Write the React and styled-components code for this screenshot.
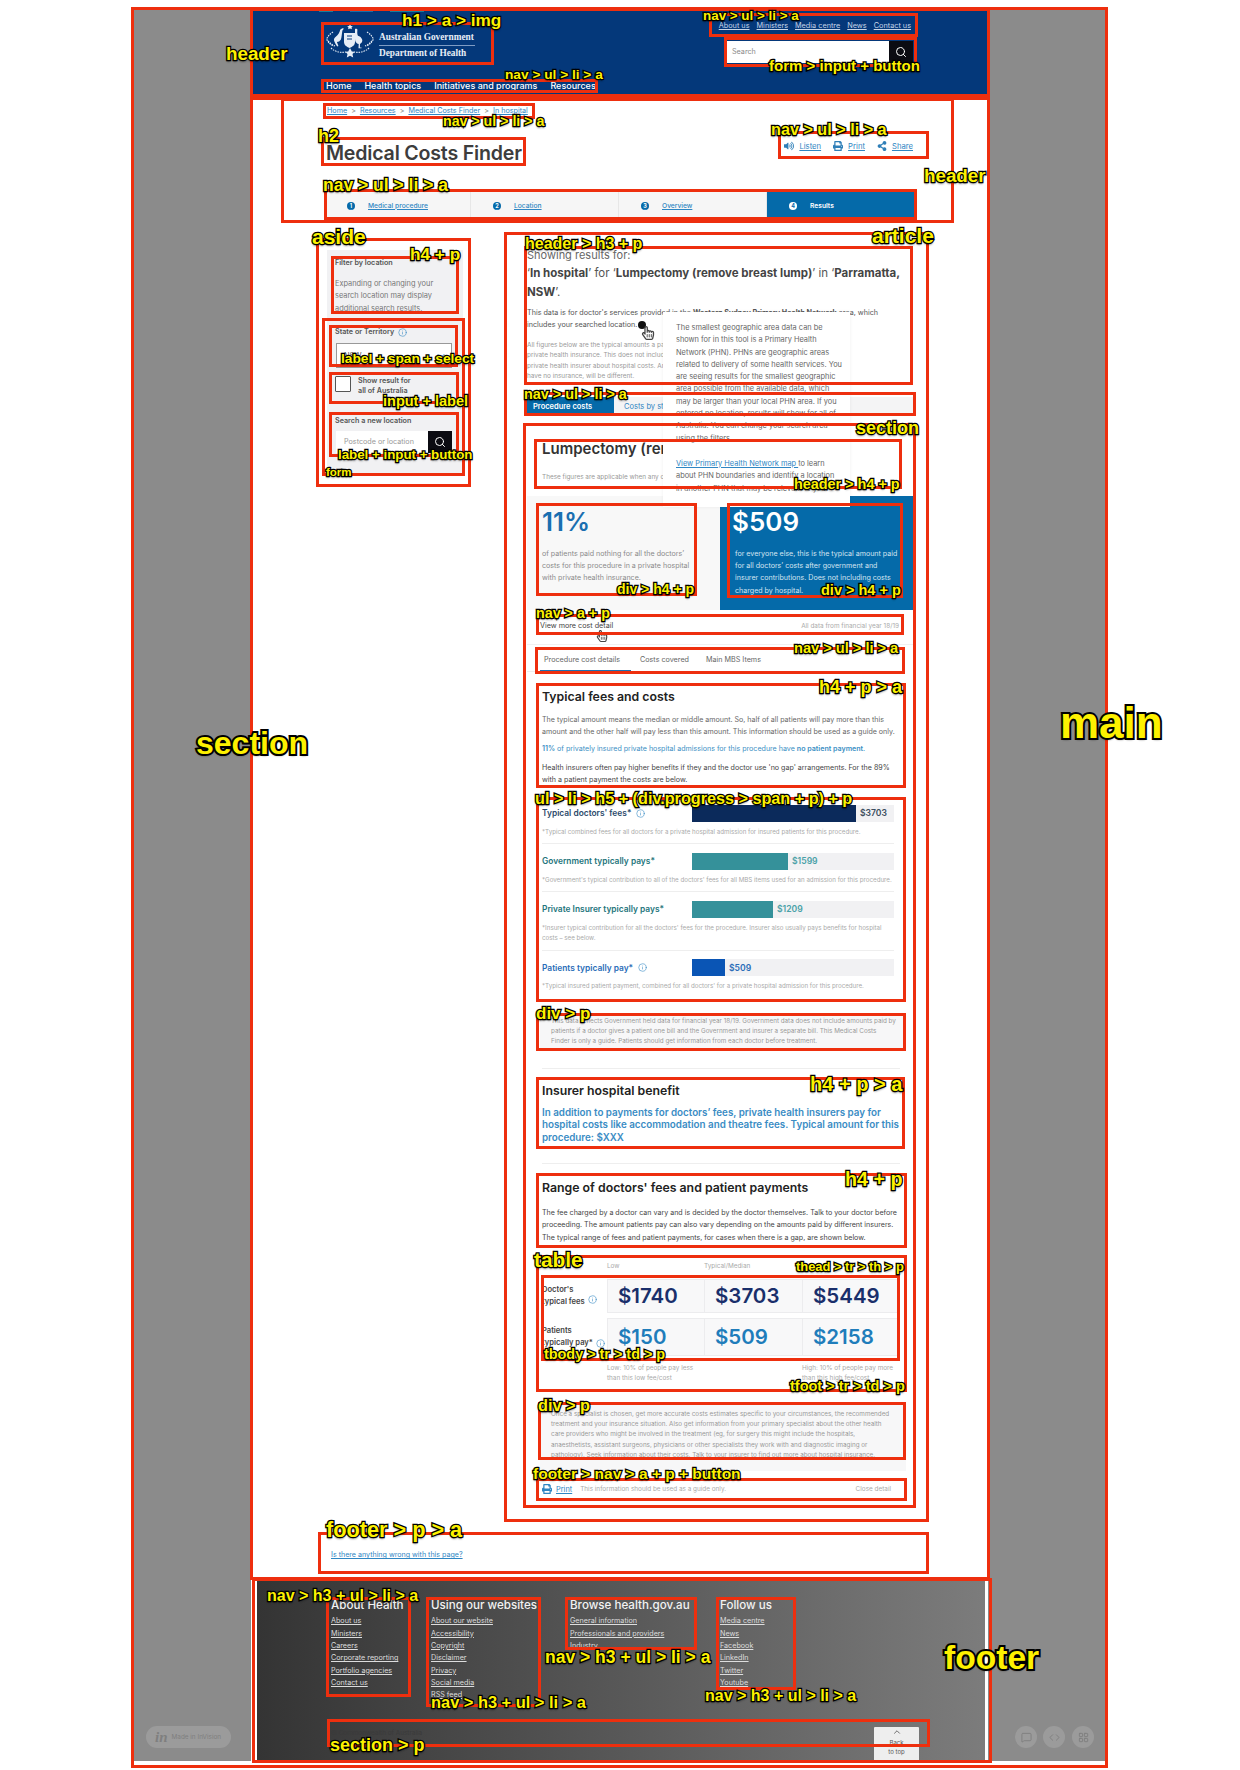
import React from 'react';
import styled, { createGlobalStyle } from 'styled-components';
import { FaVolumeUp, FaPrint, FaRegHandPointer, FaShareAlt } from 'react-icons/fa';
import { Search, ChevronDown, ChevronUp, Info, MessageSquare, Code, LayoutGrid } from 'lucide-react';

const GlobalStyle = createGlobalStyle`
  html, body { margin: 0; padding: 0; background: #fff; }
  body { font-family: Inter, "Noto Sans", sans-serif; color: #444; -webkit-font-smoothing: antialiased; }
  p, h1, h2, h3, h4, h5, ul { margin: 0; padding: 0; }
  ul { list-style: none; }
`;

const Page = styled.div`
  position: relative;
  width: 1240px;
  height: 1770px;
  overflow: hidden;
  background: #fff;
`;

const Backdrop = styled.div`
  margin: 8px 0 0 133px;
  width: 974px;
  height: 1753px;
  padding-left: 118px;
  box-sizing: border-box;
  background: #8b8b8b;
`;

const Column = styled.div`
  width: 737px;
  height: 100%;
  background: #fff;
  display: flex;
  flex-direction: column;
`;

/* masthead */
const Masthead = styled.header`
  background: #04387a;
  height: 86px;
  flex: none;
  box-sizing: border-box;
  padding-top: 1px;
`;
const Strip = styled.div`
  display: flex;
  height: 3px;
  padding-left: 68px;
  gap: 17px;
`;
const StripBit = styled.span`
  width: ${p => p.$w}px;
  background: ${p => p.$c};
`;
const MastRow = styled.div`
  display: flex;
  justify-content: space-between;
  padding: 9px 75px 0 74px;
`;
const Brand = styled.a`
  display: flex;
  align-items: center;
  gap: 4px;
  margin-top: 4px;
  height: 34px;
  color: #fff;
`;
const BrandText = styled.div`
  font-family: "Liberation Serif", serif;
  font-weight: 700;
  font-size: 9.3px;
  line-height: 12px;
  color: #e8eef6;
  padding-top: 5px;
`;
const BrandLine = styled.div`
  border-top: 1px solid #7f9cc4;
  margin: 2px 0 1px;
  width: 96px;
`;
const MastRight = styled.div`
  display: flex;
  flex-direction: column;
  align-items: flex-end;
`;
const TopLinks = styled.ul`
  display: flex;
  gap: 7px;
  height: 10px;
  padding-right: 2px;
`;
const TopLink = styled.a`
  display: block;
  font-size: 7.3px;
  line-height: 10px;
  color: #c5d4e8;
  text-decoration: underline;
`;
const SearchForm = styled.form`
  display: flex;
  margin-top: 10px;
  width: 187px;
  height: 22px;
`;
const SearchInput = styled.div`
  flex: 1;
  background: #fff;
  font-size: 7.2px;
  line-height: 22px;
  color: #888;
  padding-left: 6px;
`;
const SearchBtn = styled.button`
  width: 24px;
  border: 0;
  padding: 0;
  background: #0b0b12;
  color: #fff;
  display: flex;
  align-items: center;
  justify-content: center;
`;
const MainNav = styled.ul`
  display: flex;
  gap: 13px;
  margin: 17px 0 0 75px;
`;
const MainLink = styled.a`
  display: block;
  font-size: 9px;
  line-height: 12px;
  font-weight: 500;
  color: #fff;
`;

/* page header */
const PageHead = styled.div`
  padding: 11px 0 0 76px;
  flex: none;
`;
const Crumbs = styled.ul`
  display: flex;
  gap: 4px;
  font-size: 7.2px;
  line-height: 12px;
  color: #888;
`;
const Link = styled.a`
  color: #2f86c3;
  text-decoration: underline;
`;
const TitleRow = styled.div`
  display: flex;
  justify-content: space-between;
  padding: 24px 75px 0 0;
  height: 51px;
  box-sizing: border-box;
`;
const Title = styled.h2`
  font-size: 19.6px;
  line-height: 24px;
  font-weight: 600;
  color: #3d3d3d;
  letter-spacing: -0.2px;
  margin-left: -1px;
`;
const Tools = styled.ul`
  display: flex;
  align-items: center;
  gap: 12px;
  height: 12px;
  margin-top: -1px;
  font-size: 7.7px;
  color: #2f7fb8;
`;
const Tool = styled.li`
  display: flex;
  align-items: center;
  gap: 5px;
`;
const Steps = styled.ul`
  display: grid;
  grid-template-columns: 146px 148px 148px 148px;
  width: 590px;
  height: 27px;
  margin: 24px 0 0 -2px;
`;
const Step = styled.li`
  display: flex;
  align-items: center;
  gap: 13px;
  padding-left: 22px;
  font-size: 6.7px;
  background: ${p => (p.$on ? '#056aa9' : '#f6f6f6')};
  color: ${p => (p.$on ? '#fff' : '#2f86c3')};
  border-right: ${p => (p.$on ? '0' : '1px solid #e7e7e7')};
  text-decoration: ${p => (p.$on ? 'none' : 'underline')};
  font-weight: ${p => (p.$on ? 600 : 500)};
`;
const StepNum = styled.span`
  width: 8px;
  height: 8px;
  border-radius: 50%;
  flex: none;
  font-size: 5.5px;
  line-height: 8px;
  text-align: center;
  font-weight: 700;
  display: block;
  background: ${p => (p.$on ? '#fff' : '#056aa9')};
  color: ${p => (p.$on ? '#056aa9' : '#fff')};
`;

/* body */
const Body = styled.div`
  display: grid;
  grid-template-columns: 136px 388px;
  column-gap: 64px;
  margin-top: 29px;
  padding-left: 76px;
  flex: none;
`;

/* aside */
const Aside = styled.aside`
  margin-top: 2px;
  height: 223px;
  box-sizing: border-box;
  padding: 8px 11px 0 8px;
  background: #f1f1f3;
  align-self: start;
`;
const AsideHead = styled.h4`
  font-size: 7.2px;
  line-height: 10px;
  font-weight: 600;
  color: #555;
`;
const AsideText = styled.p`
  font-size: 7.4px;
  line-height: 12.4px;
  color: #777;
  margin-top: 10px;
`;
const AsideLabel = styled.div`
  display: flex;
  align-items: center;
  gap: 4px;
  font-size: 7.2px;
  line-height: 10px;
  font-weight: 600;
  color: #555;
  margin-top: ${p => p.$mt}px;
`;
const SelectBox = styled.div`
  box-sizing: border-box;
  display: flex;
  justify-content: space-between;
  align-items: center;
  width: 116px;
  height: 25px;
  margin: 6px 0 0 1px;
  padding: 0 4px 0 7px;
  background: #fff;
  border: 1px solid #999;
  font-size: 7.4px;
  color: #555;
`;
const CheckRow = styled.div`
  display: flex;
  gap: 7px;
  margin-top: 8px;
  font-size: 7.2px;
  line-height: 10px;
  font-weight: 600;
  color: #555;
`;
const CheckMark = styled.span`
  display: block;
  width: 16px;
  height: 16px;
  flex: none;
  box-sizing: border-box;
  background: #fff;
  border: 1px solid #555;
  border-radius: 1px;
`;
const LocationRow = styled.div`
  display: flex;
  width: 116px;
  height: 22px;
  margin: 5px 0 0 1px;
`;
const LocationInput = styled.div`
  flex: 1;
  background: #fff;
  font-size: 7.2px;
  line-height: 22px;
  padding-left: 8px;
  color: #999;
`;

/* article */
const Article = styled.article`
  position: relative;
`;
const Showing = styled.h3`
  font-size: 11px;
  line-height: 14px;
  font-weight: 400;
  color: #666;
`;
const Sentence = styled.p`
  font-size: 11.5px;
  line-height: 19px;
  font-weight: 400;
  color: #555;
  margin-top: 2px;
  max-width: 384px;
  b { font-weight: 700; color: #444; }
`;
const Intro = styled.p`
  font-size: 7.2px;
  line-height: 12px;
  color: #555;
  margin-top: 5px;
  max-width: 358px;
`;
const Fine = styled.p`
  font-size: 6.4px;
  line-height: 10.4px;
  color: #9a9a9a;
  margin-top: 9px;
  white-space: nowrap;
`;
const Tabs = styled.ul`
  display: flex;
  margin-top: 15px;
  height: 19px;
  background: #f4f4f5;
  font-size: 7.5px;
  line-height: 19px;
`;
const Tab = styled.li`
  width: ${p => p.$w}px;
  box-sizing: border-box;
  padding-left: ${p => p.$on ? 6 : 10}px;
  background: ${p => (p.$on ? '#056aa9' : 'transparent')};
  color: ${p => (p.$on ? '#fff' : '#2f86c3')};
  font-weight: ${p => (p.$on ? 600 : 400)};
`;
const Dot = styled.span`
  position: absolute;
  left: 111px;
  top: 73px;
  width: 8px;
  height: 8px;
  border-radius: 50%;
  background: #111;
`;
const Hand = styled.span`
  position: absolute;
  left: ${p => p.$x}px;
  top: ${p => p.$y}px;
  color: #444;
  display: flex;
  z-index: 3;
`;
const Popover = styled.div`
  position: absolute;
  left: 136px;
  top: 64px;
  width: 187px;
  height: 195px;
  box-sizing: border-box;
  padding: 10px 8px 0 13px;
  overflow: hidden;
  background: #fff;
  box-shadow: 0 0 4px rgba(0, 0, 0, 0.06);
  z-index: 2;
  font-size: 7.4px;
  line-height: 12.3px;
  color: #666;
`;
const Gap = styled.div`
  height: ${p => p.$h}px;
`;
const Lump = styled.h4`
  font-size: 15px;
  line-height: 20px;
  font-weight: 600;
  color: #333;
  margin: 23px 0 0 15px;
  white-space: nowrap;
`;
const LumpNote = styled.p`
  font-size: 6.4px;
  line-height: 10px;
  color: #999;
  margin: 13px 0 0 15px;
`;
const Cards = styled.div`
  display: grid;
  grid-template-columns: 193px 195px;
  margin-top: 14px;
  height: 114px;
`;
const Card = styled.div`
  background: ${p => (p.$blue ? '#056aa9' : '#f8f8f8')};
  padding: 11px 0 0 ${p => (p.$blue ? 12 : 15)}px;
`;
const Big = styled.div`
  font-size: 26px;
  line-height: 30px;
  font-weight: 600;
  color: ${p => (p.$blue ? '#fff' : '#1a6fb0')};
`;
const CardText = styled.p`
  font-size: 7.1px;
  line-height: 12.4px;
  margin: 11px 0 0 ${p => (p.$blue ? 3 : 0)}px;
  max-width: ${p => (p.$blue ? 166 : 150)}px;
  color: ${p => (p.$blue ? '#d5e5f1' : '#8a8a8a')};
`;
const CostNav = styled.div`
  display: flex;
  justify-content: space-between;
  align-items: baseline;
  padding: 11px 16px 13px 13px;
  border-bottom: 1px solid #f1f1f1;
`;
const CostLink = styled.a`
  font-size: 7.2px;
  line-height: 10px;
  color: #444;
`;
const CostDate = styled.span`
  font-size: 6.4px;
  line-height: 10px;
  color: #aaa;
`;
const DetailTabs = styled.ul`
  display: flex;
  padding-left: 13px;
  margin-right: 10px;
  border-bottom: 1px solid #eee;
`;
const DetailTab = styled.li`
  box-sizing: border-box;
  width: ${p => p.$w}px;
  padding: 10px 0 5px 4px;
  font-size: 7.2px;
  line-height: 10px;
  color: #666;
  border-bottom: 2px solid ${p => (p.$on ? '#1f6fb0' : 'transparent')};
  margin-bottom: -1px;
  margin-right: ${p => p.$mr ?? 0}px;
`;
const Detail = styled.div`
  padding: 17px 15px 0 15px;
`;
const Head = styled.h4`
  font-size: 12.3px;
  line-height: 16px;
  font-weight: 600;
  color: #222;
`;
const Para = styled.p`
  font-size: 7.1px;
  line-height: 12.3px;
  color: ${p => p.$c || '#666'};
  margin-top: ${p => p.$mt}px;
  b { font-weight: 600; }
`;
const BarList = styled.ul`
  margin-top: 10px;
`;
const BarRow = styled.li`
  padding: 8.5px 0 6px;
  border-bottom: ${p => (p.$last ? '0' : '1px solid #eee')};
  margin-right: 6px;
`;
const BarHead = styled.div`
  display: grid;
  grid-template-columns: 150px 202px;
  align-items: center;
`;
const BarTitle = styled.h5`
  display: flex;
  align-items: center;
  gap: 5px;
  font-size: 8.4px;
  line-height: 12px;
  font-weight: 600;
  color: ${p => p.$c};
`;
const Track = styled.div`
  display: flex;
  align-items: center;
  height: 17px;
  background: #f1f1f3;
`;
const Fill = styled.span`
  height: 100%;
  flex: none;
  background: ${p => p.$c};
`;
const Amount = styled.span`
  margin-left: 4px;
  font-size: 8.6px;
  font-weight: 600;
  color: ${p => p.$c};
`;
const BarNote = styled.p`
  font-size: 6.2px;
  line-height: 10.5px;
  color: #aaa;
  margin-top: 5px;
`;
const NoteBox = styled.div`
  background: #f7f7f8;
  margin: ${p => p.$mt}px -6px 0 -2px;
  padding: ${p => p.$pt}px 10px ${p => p.$pb}px 11px;
  font-size: 6.3px;
  line-height: 10.3px;
  color: #999;
`;
const Rule = styled.hr`
  border: 0;
  border-top: 1px solid #eee;
  margin: ${p => p.$mt}px 0 ${p => p.$mb}px;
`;
const Benefit = styled.p`
  font-size: 9.8px;
  line-height: 12.5px;
  font-weight: 600;
  color: #3a8cc4;
  margin-top: 8px;
`;
const FeeTable = styled.div`
  display: grid;
  grid-template-columns: 65px 97px 98px 97px;
  margin-top: 17px;
  font-size: 6.4px;
  line-height: 10px;
  color: #aaa;
`;
const ThCell = styled.div`
  padding-bottom: 8px;
`;
const RowLabel = styled.div`
  display: flex;
  align-items: center;
  gap: 3px;
  font-size: 7.6px;
  line-height: 12.3px;
  font-weight: 600;
  color: #444;
  margin-bottom: 5px;
  svg { align-self: flex-end; margin-bottom: ${p => (p.$second ? 8 : 9)}px; }
`;
const Fee = styled.div`
  box-sizing: border-box;
  height: ${p => p.$h}px;
  margin-bottom: 5px;
  padding-left: 10px;
  background: #f8f8f9;
  border: 1px solid #ececee;
  border-right-width: ${p => (p.$end ? 1 : 0)}px;
  font-size: 20.5px;
  line-height: ${p => p.$h - 2}px;
  font-weight: 600;
  color: ${p => p.$c};
`;
const TableFoot = styled.div`
  padding-top: 2px;
  white-space: nowrap;
`;
const DetailFoot = styled.div`
  display: flex;
  align-items: center;
  margin: 13px 9px 0 0;
  height: 10px;
  font-size: 6.4px;
  color: #aaa;
`;
const PrintLink = styled(Link)`
  font-size: 7.4px;
  margin: 0 8px 0 4px;
`;
const CloseBtn = styled.span`
  margin-left: auto;
`;

/* report link */
const Report = styled.p`
  margin: 56px 0 0 80px;
  font-size: 7.1px;
  line-height: 10px;
  flex: none;
`;

/* footer */
const Footer = styled.footer`
  margin: 20px 3px 0 6px;
  flex: 1;
  background: linear-gradient(90deg, #343434 0%, #7c7c7c 100%);
  display: flex;
  flex-direction: column;
  padding: 18px 66px 0 74px;
`;
const FootCols = styled.div`
  display: grid;
  grid-template-columns: 100px 139px 150px auto;
`;
const FootHead = styled.h3`
  font-size: 11.6px;
  line-height: 14px;
  font-weight: 500;
  color: #f2f2f2;
  white-space: nowrap;
`;
const FootList = styled.ul`
  margin-top: 3px;
`;
const FootLink = styled.a`
  display: block;
  font-size: 7.2px;
  line-height: 12.3px;
  color: #ddd;
  text-decoration: underline;
`;
const FootBase = styled.div`
  display: flex;
  justify-content: space-between;
  align-items: flex-start;
  margin-top: auto;
`;
const Copyright = styled.p`
  font-size: 6.4px;
  line-height: 10px;
  color: #3a3a3a;
  padding-top: 1px;
`;
const BackTop = styled.div`
  width: 45px;
  height: 34px;
  background: #eee;
  border-radius: 1px 1px 0 0;
  text-align: center;
  font-size: 6px;
  line-height: 8.4px;
  color: #555;
`;

/* invision chrome */
const Pill = styled.div`
  position: absolute;
  left: 146px;
  top: 1726px;
  width: 85px;
  height: 22px;
  border-radius: 11px;
  background: #9b9b9b;
  color: #7f7f7f;
  display: flex;
  align-items: center;
  gap: 4px;
  padding-left: 9px;
  box-sizing: border-box;
  font-size: 6.4px;
`;
const PillIn = styled.span`
  font-family: "Liberation Serif", serif;
  font-style: italic;
  font-size: 15px;
  font-weight: 700;
`;
const Round = styled.div`
  position: absolute;
  left: ${p => p.$x}px;
  top: 1726px;
  width: 22px;
  height: 22px;
  border-radius: 50%;
  background: #9b9b9b;
  color: #7f7f7f;
  display: flex;
  align-items: center;
  justify-content: center;
`;

/* annotation layer */
const Mark = styled.div`
  position: absolute;
  left: ${p => p.$x}px;
  top: ${p => p.$y}px;
  width: ${p => p.$w}px;
  height: ${p => p.$h}px;
  box-sizing: border-box;
  border: 3px solid #ee2f0e;
  z-index: 5;
  pointer-events: none;
`;
const Tag = styled.span`
  position: absolute;
  left: ${p => p.$x}px;
  top: ${p => p.$y}px;
  transform: translateY(-50%);
  font-family: "Liberation Sans", Arial, sans-serif;
  font-weight: 700;
  font-size: ${p => p.$s}px;
  line-height: 1;
  white-space: nowrap;
  color: #fdf100;
  -webkit-text-stroke: ${p => (p.$s > 25 ? 4 : 2.5)}px #000;
  paint-order: stroke fill;
  text-shadow: 0 2px 2px rgba(0, 0, 0, 0.45);
  z-index: 6;
`;

const boxes = [
  [131, 7, 1108, 1768], [250, 8, 990, 97], [250, 97, 990, 1580], [252, 1578, 992, 1763],
  [321, 22, 494, 65], [709, 13, 918, 37], [724, 37, 917, 67], [321, 79, 598, 93],
  [281, 98, 954, 223], [323, 103, 535, 119], [321, 137, 526, 166], [778, 131, 929, 159],
  [324, 189, 917, 220], [316, 238, 471, 487], [331, 256, 459, 314], [322, 318, 465, 476],
  [329, 325, 458, 367], [329, 372, 459, 404], [329, 412, 459, 457], [504, 232, 929, 1522],
  [524, 246, 913, 385], [524, 392, 916, 416], [523, 423, 916, 1508], [534, 439, 902, 489],
  [536, 503, 697, 596], [727, 503, 903, 598], [536, 614, 904, 635], [535, 647, 905, 674],
  [536, 683, 906, 788], [536, 797, 906, 1002], [536, 1013, 906, 1051], [536, 1077, 905, 1149],
  [536, 1173, 907, 1248], [536, 1255, 907, 1392], [541, 1275, 900, 1361], [538, 1402, 906, 1460],
  [536, 1478, 907, 1501], [318, 1532, 929, 1574], [326, 1597, 411, 1697], [426, 1597, 541, 1707],
  [565, 1597, 697, 1650], [716, 1597, 796, 1690], [327, 1719, 930, 1747],
];

const NAV = 'nav > ul > li > a';
const FOOTNAV = 'nav > h3 + ul > li > a';
const tags = [
  ['h1 > a > img', 402, 21, 17.2], ['header', 226, 54, 18.8], [NAV, 703, 16, 13.4],
  ['form > input + button', 769, 65, 15], [NAV, 505, 75, 13.7], [NAV, 443, 121, 14.2],
  ['h2', 318, 136, 18], [NAV, 771, 129, 16.2], ['header', 924, 176, 18.8], [NAV, 323, 186, 17.5],
  ['aside', 312, 236, 21], ['h4 + p', 410, 255, 17.2], ['header > h3 + p', 525, 244, 16],
  ['article', 872, 235, 21], ['label + span + select', 341, 359, 13.7], ['input + label', 383, 401, 14.5],
  ['label + input + button', 338, 455, 13.3], ['form', 326, 473, 11.5], [NAV, 524, 394, 14.4],
  ['section', 856, 428, 18], ['header > h4 + p', 794, 484, 14.4], ['div > h4 + p', 617, 589, 14],
  ['div > h4 + p', 821, 590, 14.5], ['nav > a + p', 536, 613, 14.3], [NAV, 794, 648, 14.6],
  ['h4 + p > a', 819, 687, 18], ['ul > li > h5 + (div.progress > span + p) + p', 535, 798, 16.2],
  ['div > p', 536, 1013, 17], ['h4 + p > a', 810, 1084, 20], ['h4 + p', 845, 1180, 19.7],
  ['table', 534, 1260, 20.8], ['thead > tr > th > p', 796, 1267, 12.9], ['tbody > tr > td > p', 544, 1354, 14.4],
  ['tfoot > tr > td > p', 790, 1386, 14.5], ['div > p', 538, 1405, 16.3], ['footer > nav > a + p + button', 533, 1474, 15.5],
  ['footer > p > a', 326, 1530, 21.7], ['main', 1060, 723, 44], ['section', 196, 743, 32], ['footer', 944, 1658, 33.6],
  [FOOTNAV, 267, 1596, 16], [FOOTNAV, 545, 1658, 17.5], [FOOTNAV, 431, 1702, 16.4], [FOOTNAV, 705, 1696, 16],
  ['section > p', 330, 1745, 18],
];

const topLinks = ['About us', 'Ministers', 'Media centre', 'News', 'Contact us'];
const mainLinks = ['Home', 'Health topics', 'Initiatives and programs', 'Resources'];
const steps = ['Medical procedure', 'Location', 'Overview', 'Results'];
const bars = [
  { title: "Typical doctors' fees*", info: true, c: '#2c4a6b', fill: '#0b2a5b', w: 164, amount: '$3703', ac: '#3c4e60',
    note: '*Typical combined fees for all doctors for a private hospital admission for insured patients for this procedure.' },
  { title: 'Government typically pays*', c: '#24757c', fill: '#35919a', w: 96, amount: '$1599', ac: '#4aa1a8',
    note: "*Government's typical contribution to all of the doctors' fees for all MBS items used for an admission for this procedure." },
  { title: 'Private Insurer typically pays*', c: '#24757c', fill: '#35919a', w: 81, amount: '$1209', ac: '#4aa1a8',
    note: "*Insurer typical contribution for all the doctors' fees for the procedure. Insurer also usually pays benefits for hospital costs – see below." },
  { title: 'Patients typically pay*', info: true, c: '#2a6db8', fill: '#0a55b5', w: 33, amount: '$509', ac: '#2a6db8',
    note: "*Typical insured patient payment, combined for all doctors' for a private hospital admission for this procedure." },
];
const footerCols = [
  ['About Health', ['About us', 'Ministers', 'Careers', 'Corporate reporting', 'Portfolio agencies', 'Contact us']],
  ['Using our websites', ['About our website', 'Accessibility', 'Copyright', 'Disclaimer', 'Privacy', 'Social media', 'RSS feed']],
  ['Browse health.gov.au', ['General information', 'Professionals and providers', 'Industry']],
  ['Follow us', ['Media centre', 'News', 'Facebook', 'LinkedIn', 'Twitter', 'Youtube']],
];

function CoatOfArms() {
  return (
    <svg width="50" height="36" viewBox="0 0 50 36" fill="#e6edf6">
      <path d="M25 0.5l1 1.6 1.8.2-1.3 1.2.4 1.8-1.9-.9-1.9.9.4-1.8-1.3-1.2 1.8-.2z" />
      <path d="M18 4c-1 .6-2 .8-2.800 1.800-.6 3-2 5-5 7.500-1.500 1.300-1.500 3-.6 4.700.4.9 1.600 3.500 2.800 4.500l1-.5-1.500-4c1.500 0 3-.8 4-2.500.8-2 .9-6 1.500-9 .4-.6 1-1.200 1.300-1.800z" />
      <path d="M30 5c.7-.6 2.200-.5 2.400.5-.1 2.500-.4 4.500.5 6.200 1.600.2 4 2 4.400 4.300.2 2-1 3.300-2.300 4l-.1 3.500h1.600v.8h-3l.2-4.300c-1.500-.2-3-1.500-3.500-3.300-.3-2-.2-5-.2-8.700z" />
      <path d="M19 9h11v9c0 3-2.500 4.800-5.500 6C21.500 22.800 19 21 19 18z" />
      <path d="M25 24l1.800 3.500 3 .3-2.300 2.200.7 3.400-3.200-1.700-3.200 1.700.7-3.400-2.300-2.200 3-.3z" />
      <g fill="none" stroke="#e6edf6" strokeWidth="1.100" strokeDasharray="1.500 1">
        <path d="M8 8c-3 2-5 4-6.500 7 2 4 4 6 7.500 7" />
        <path d="M42 8c3 2 5 4 6.500 7-2 4-4 6-7.500 7" />
        <path d="M6 24c4 4 10 5 15 4" />
        <path d="M44 24c-4 4-10 5-15 4" />
        <path d="M3 17c2 2 4 4 7 5" />
        <path d="M47 17c-2 2-4 4-7 5" />
      </g>
      <path d="M22 12h5M22 15h5" stroke="#04387a" strokeWidth="1" />
    </svg>
  );
}

function InfoIcon({ size = 9, color = '#2f86c3' }) {
  return <Info size={size} color={color} strokeWidth={1.5} />;
}

export default function App() {
  return (
    <Page>
      <GlobalStyle />
      <Backdrop>
        <Column>
          <Masthead>
            <Strip>
              <StripBit $w={14} $c="#1a7f9c" />
              <StripBit $w={23} $c="#1a6fa8" />
              <StripBit $w={34} $c="#1a7f9c" />
            </Strip>
            <MastRow>
              <Brand>
                <CoatOfArms />
                <BrandText>
                  Australian Government
                  <BrandLine />
                  Department of Health
                </BrandText>
              </Brand>
              <MastRight>
                <TopLinks>
                  {topLinks.map(l => <li key={l}><TopLink>{l}</TopLink></li>)}
                </TopLinks>
                <SearchForm>
                  <SearchInput>Search</SearchInput>
                  <SearchBtn type="button"><Search size={12} /></SearchBtn>
                </SearchForm>
              </MastRight>
            </MastRow>
            <MainNav>
              {mainLinks.map(l => <li key={l}><MainLink>{l}</MainLink></li>)}
            </MainNav>
          </Masthead>

          <PageHead>
            <Crumbs>
              <li><Link>Home</Link></li><li>&gt;</li>
              <li><Link>Resources</Link></li><li>&gt;</li>
              <li><Link>Medical Costs Finder</Link></li><li>&gt;</li>
              <li><Link>In hospital</Link></li>
            </Crumbs>
            <TitleRow>
              <Title>Medical Costs Finder</Title>
              <Tools>
                <Tool><FaVolumeUp size={10} /><Link>Listen</Link></Tool>
                <Tool><FaPrint size={10} /><Link>Print</Link></Tool>
                <Tool><FaShareAlt size={10} /><Link>Share</Link></Tool>
              </Tools>
            </TitleRow>
            <Steps>
              {steps.map((s, i) => (
                <Step key={s} $on={i === 3}>
                  <StepNum $on={i === 3}>{i + 1}</StepNum>
                  {s}
                </Step>
              ))}
            </Steps>
          </PageHead>

          <Body>
            <Aside>
              <AsideHead>Filter by location</AsideHead>
              <AsideText>Expanding or changing your search location may display additional search results.</AsideText>
              <AsideLabel $mt={12}>State or Territory <InfoIcon /></AsideLabel>
              <SelectBox>NSW<ChevronDown size={12} color="#2f86c3" /></SelectBox>
              <CheckRow>
                <CheckMark />
                <span>Show result for<br />all of Australia</span>
              </CheckRow>
              <AsideLabel $mt={20}>Search a new location</AsideLabel>
              <LocationRow>
                <LocationInput>Postcode or location</LocationInput>
                <SearchBtn type="button"><Search size={12} /></SearchBtn>
              </LocationRow>
            </Aside>

            <Article>
              <Showing>Showing results for:</Showing>
              <Sentence>
                ‘<b>In hospital</b>’ for ‘<b>Lumpectomy (remove breast lump)</b>’ in ‘<b>Parramatta, NSW</b>’.
              </Sentence>
              <Intro>
                This data is for doctor's services provided in the <b>Western Sydney Primary Health Network</b> area, which includes your searched location.
              </Intro>
              <Dot />
              <Hand $x={114} $y={78}><FaRegHandPointer size={14} /></Hand>
              <Fine>
                All figures below are the typical amounts a patient with private health insurance paid if they have<br />
                private health insurance. This does not include hospital costs, ambulance, medical bills or your<br />
                private health insurer about hospital costs. Amounts for a public hospital, or<br />
                have no insurance, will be different.
              </Fine>
              <Tabs>
                <Tab $on $w={87}>Procedure costs</Tab>
                <Tab $w={120}>Costs by state</Tab>
              </Tabs>
              <Popover>
                The smallest geographic area data can be shown for in this tool is a Primary Health Network (PHN). PHNs are geographic areas related to delivery of some health services. You are seeing results for the smallest geographic area possible from the available data, which may be larger than your local PHN area. If you entered no location, results will show for all of Australia. You can change your search area using the filters.
                <Gap $h={13} />
                <Link>View Primary Health Network map </Link>to learn about PHN boundaries and identify a location in another PHN that may be relevant to you.
              </Popover>

              <Lump>Lumpectomy (remove breast lump)</Lump>
              <LumpNote>These figures are applicable when any of</LumpNote>
              <Cards>
                <Card>
                  <Big>11%</Big>
                  <CardText>of patients paid nothing for all the doctors’ costs for this procedure in a private hospital with private health insurance.</CardText>
                </Card>
                <Card $blue>
                  <Big $blue>$509</Big>
                  <CardText $blue>for everyone else, this is the typical amount paid for all doctors’ costs after government and insurer contributions. Does not including costs charged by hospital.</CardText>
                </Card>
              </Cards>
              <CostNav>
                <CostLink>View more cost detail</CostLink>
                <CostDate>All data from financial year 18/19</CostDate>
              </CostNav>
              <Hand $x={69} $y={382}><FaRegHandPointer size={12} /></Hand>
              <DetailTabs>
                <DetailTab $on $w={91} $mr={5}>Procedure cost details</DetailTab>
                <DetailTab $w={66}>Costs covered</DetailTab>
                <DetailTab $w={80}>Main MBS Items</DetailTab>
              </DetailTabs>

              <Detail>
                <Head>Typical fees and costs</Head>
                <Para $mt={9}>The typical amount means the median or middle amount. So, half of all patients will pay more than this amount and the other half will pay less than this amount. This information should be used as a guide only.</Para>
                <Para $mt={5} $c="#3b8fc4"><b>11%</b> of privately insured private hospital admissions for this procedure have <b>no patient payment</b>.</Para>
                <Para $mt={6} $c="#444">Health insurers often pay higher benefits if they and the doctor use 'no gap' arrangements. For the 89% with a patient payment the costs are below.</Para>

                <BarList>
                  {bars.map((b, i) => (
                    <BarRow key={b.title} $last={i === bars.length - 1}>
                      <BarHead>
                        <BarTitle $c={b.c}>{b.title}{b.info && <InfoIcon />}</BarTitle>
                        <Track>
                          <Fill $c={b.fill} style={{ width: b.w }} />
                          <Amount $c={b.ac}>{b.amount}</Amount>
                        </Track>
                      </BarHead>
                      <BarNote>{b.note}</BarNote>
                    </BarRow>
                  ))}
                </BarList>

                <NoteBox $mt={15} $pt={3} $pb={4}>
                  This data reflects Government held data for financial year 18/19. Government data does not include amounts paid by patients if a doctor gives a patient one bill and the Government and insurer a separate bill. This Medical Costs Finder is only a guide. Patients should get information from each doctor before treatment.
                </NoteBox>
                <Rule $mt={17} $mb={14} />
                <Head>Insurer hospital benefit</Head>
                <Benefit>In addition to payments for doctors’ fees, private health insurers pay for hospital costs like accommodation and theatre fees. Typical amount for this procedure: $XXX</Benefit>
                <Rule $mt={19} $mb={16} />
                <Head>Range of doctors' fees and patient payments</Head>
                <Para $mt={11} $c="#444">The fee charged by a doctor can vary and is decided by the doctor themselves. Talk to your doctor before proceeding. The amount patients pay can also vary depending on the amounts paid by different insurers. The typical range of fees and patient payments, for cases when there is a gap, are shown below.</Para>

                <FeeTable>
                  <ThCell />
                  <ThCell>Low</ThCell>
                  <ThCell>Typical/Median</ThCell>
                  <ThCell />
                  <RowLabel><span>Doctor's<br />typical fees</span> <InfoIcon /></RowLabel>
                  <Fee $h={34} $c="#1a2f6b">$1740</Fee>
                  <Fee $h={34} $c="#1a2f6b">$3703</Fee>
                  <Fee $h={34} $c="#1a2f6b" $end>$5449</Fee>
                  <RowLabel $second><span>Patients<br />typically pay*</span> <InfoIcon /></RowLabel>
                  <Fee $h={38} $c="#1f7dbb">$150</Fee>
                  <Fee $h={38} $c="#1f7dbb">$509</Fee>
                  <Fee $h={38} $c="#1f7dbb" $end>$2158</Fee>
                  <div />
                  <TableFoot>Low: 10% of people pay less<br />than this low fee/cost</TableFoot>
                  <div />
                  <TableFoot>High: 10% of people pay more<br />than this high fee/cost</TableFoot>
                </FeeTable>

                <NoteBox $mt={20} $pt={6} $pb={11}>
                  Once a specialist is chosen, get more accurate costs estimates specific to your circumstances, the recommended treatment and your insurance situation. Also get information from your primary specialist about the other health care providers who might be involved in the treatment (eg, for surgery this might include the hospitals, anaesthetists, assistant surgeons, physicians or other specialists they work with and diagnostic imaging or pathology). Seek information about their costs. Talk to your insurer to find out more about hospital insurance.
                </NoteBox>
                <DetailFoot>
                  <FaPrint size={10} color="#2f86c3" />
                  <PrintLink>Print</PrintLink>
                  This information should be used as a guide only.
                  <CloseBtn>Close detail</CloseBtn>
                </DetailFoot>
              </Detail>
            </Article>
          </Body>

          <Report><Link>Is there anything wrong with this page?</Link></Report>

          <Footer>
            <FootCols>
              {footerCols.map(([head, links]) => (
                <nav key={head}>
                  <FootHead>{head}</FootHead>
                  <FootList>
                    {links.map(l => <li key={l}><FootLink>{l}</FootLink></li>)}
                  </FootList>
                </nav>
              ))}
            </FootCols>
            <FootBase>
              <Copyright>© Commonwealth of Australia</Copyright>
              <BackTop>
                <ChevronUp size={10} />
                <br />Back<br />to top
              </BackTop>
            </FootBase>
          </Footer>
        </Column>
      </Backdrop>

      <Pill><PillIn>in</PillIn>Made in InVision</Pill>
      <Round $x={1015}><MessageSquare size={11} /></Round>
      <Round $x={1043}><Code size={11} /></Round>
      <Round $x={1072}><LayoutGrid size={11} /></Round>

      {boxes.map(([x1, y1, x2, y2]) => (
        <Mark key={`${x1}-${y1}`} $x={x1} $y={y1} $w={x2 - x1} $h={y2 - y1} />
      ))}
      {tags.map(([text, x, y, size]) => (
        <Tag key={`${text}-${x}-${y}`} $x={x} $y={y} $s={size}>{text}</Tag>
      ))}
    </Page>
  );
}
